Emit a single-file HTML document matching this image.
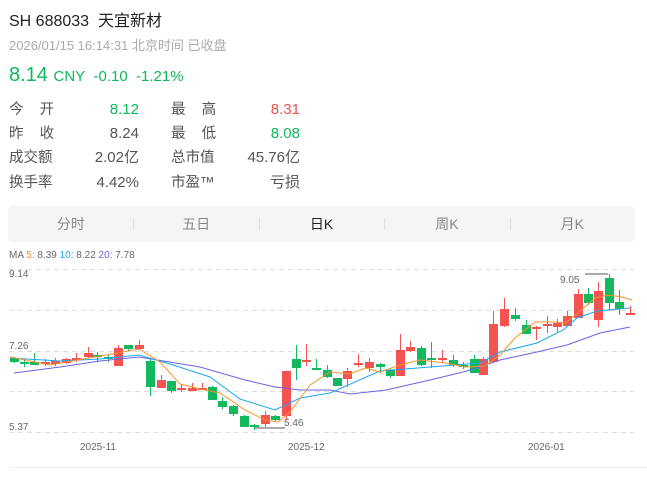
<!DOCTYPE html><html><head><meta charset="utf-8"><style>
body{margin:0;width:647px;height:477px;background:#fff;font-family:"Liberation Sans","Noto Sans CJK SC",sans-serif;position:relative;overflow:hidden}
.a{position:absolute;white-space:nowrap}
.g{color:#0cb85e}.r{color:#f24e4e}.l{color:#555;font-size:14.5px;line-height:20px}.v{color:#555;font-size:15px;line-height:20px;text-align:right}
.tabs{position:absolute;left:8px;top:206px;width:627px;height:36px;background:#f5f5f5;border-radius:5px;display:flex}
.tabs div{flex:1;text-align:center;line-height:36px;font-size:14px;color:#888;position:relative}
.tabs div+div:before{content:"";position:absolute;left:0;top:12px;height:12px;border-left:1px solid #e3e3e3}
</style></head><body>
<div class="a" style="left:9px;top:7px;font-size:16px;color:#222">SH 688033&nbsp; 天宜新材</div>
<div class="a" style="left:9px;top:35px;font-size:13px;color:#aaa">2026/01/15 16:14:31 北京时间 已收盘</div>
<div class="a g" style="left:9px;top:64px;font-size:20px">8.14 <span style="font-size:15px">CNY&nbsp; -0.10&nbsp; -1.21%</span></div>
<div class="a l" style="left:9px;top:100px">今&nbsp;&nbsp;&nbsp;&nbsp;开</div><div class="a v g" style="left:80px;width:59px;top:100px;color:#0cb85e">8.12</div>
<div class="a l" style="left:9px;top:124px">昨&nbsp;&nbsp;&nbsp;&nbsp;收</div><div class="a v" style="left:80px;width:59px;top:124px">8.24</div>
<div class="a l" style="left:9px;top:148px">成交额</div><div class="a v" style="left:80px;width:59px;top:148px">2.02亿</div>
<div class="a l" style="left:9px;top:173px">换手率</div><div class="a v" style="left:80px;width:59px;top:173px">4.42%</div>
<div class="a l" style="left:171px;top:100px">最&nbsp;&nbsp;&nbsp;&nbsp;高</div><div class="a v" style="left:240px;width:60px;top:100px;color:#f24e4e">8.31</div>
<div class="a l" style="left:171px;top:124px">最&nbsp;&nbsp;&nbsp;&nbsp;低</div><div class="a v" style="left:240px;width:60px;top:124px;color:#0cb85e">8.08</div>
<div class="a l" style="left:171px;top:148px">总市值</div><div class="a v" style="left:230px;width:70px;top:148px">45.76亿</div>
<div class="a l" style="left:171px;top:173px">市盈™</div><div class="a v" style="left:240px;width:60px;top:173px">亏损</div>
<div class="tabs"><div>分时</div><div>五日</div><div style="color:#222">日K</div><div>周K</div><div>月K</div></div>
<svg class="a" style="left:0;top:245px" width="647" height="232" viewBox="0 245 647 232">
<g font-size="10" fill="#666"><text x="9" y="258">MA <tspan fill="#f7942a">5:</tspan> 8.39 <tspan fill="#1fa6f0">10:</tspan> 8.22 <tspan fill="#6b63e8">20:</tspan> 7.78</text>
<text x="9" y="277">9.14</text><text x="9" y="349">7.26</text><text x="9" y="430">5.37</text>
<text x="80" y="450">2025-11</text><text x="288" y="450">2025-12</text><text x="528" y="450">2026-01</text>
<text x="284" y="426">5.46</text><text x="560" y="283">9.05</text></g>
<g stroke="#ddd" stroke-dasharray="5,4"><line x1="9" x2="634" y1="269.5" y2="269.5"/><line x1="9" x2="634" y1="310.5" y2="310.5"/><line x1="9" x2="634" y1="351.5" y2="351.5"/><line x1="9" x2="634" y1="391.5" y2="391.5"/><line x1="9" x2="634" y1="432.5" y2="432.5"/></g>
<line x1="9" x2="647" y1="467.5" y2="467.5" stroke="#eee"/>
<path d="M254 428H285M585 274H608" stroke="#555" fill="none"/>
<g id="c"></g>
<polyline fill="none" stroke="#6b63e8" stroke-width="1" points="14,373 60,367 100,361 139,357 200,367 245,380 275,387 300,390 330,390 350,394 386,390 430,380 467,371 500,360 537,352 567,345 600,333 630,327"/>
<polyline fill="none" stroke="#1fa6f0" stroke-width="1" points="10,358 60,361 100,359 139,355 170,364 210,377 240,399 275,410 300,398 330,393 380,371 430,367 480,363 500,352 537,343 563,330 577,318 597,311 630,308"/>
<polyline fill="none" stroke="#f7942a" stroke-width="1" points="10,357 50,365 100,356 139,349 160,362 180,384 200,389 220,393 245,410 265,420 278,422 290,412 310,385 330,372 350,374 365,368 380,372 400,365 420,360 445,363 465,367 485,366 500,355 515,338 535,322 555,322 565,323 578,313 595,298 608,295 622,297 632,300"/>
</svg>
<script>
var d=[[14,'g',358,362,357,363],[24,'g',362,363,359,367],[34,'g',362,365,353,365],[45,'r',362,364,359,366],[55,'r',361,364,358,366],[66,'r',359,363,358,364],[76,'r',358,360,353,362],[88,'r',353,357,347,358],[97,'g',355,357,352,362],[108,'g',357,359,355,362],[118,'r',348,366,345,366],[128,'g',345,349,345,351],[139,'r',345,349,340,350],[150,'g',361,387,358,396],[161,'r',380,388,375,388],[171,'g',381,391,381,393],[181,'r',388,390,385,392],[192,'r',388,391,383,391],[202,'r',388,390,383,390],[212,'g',387,400,386,400],[222,'g',401,407,397,409],[233,'g',406,414,405,416],[244,'g',416,427,415,427],[254,'g',425,426,424,430],[265,'r',415,424,411,427],[275,'g',416,420,415,422],[286,'r',371,416,371,420],[296,'g',359,368,345,380],[306,'r',360,361,344,366],[316,'g',368,369,359,370],[327,'g',370,377,365,378],[337,'g',378,386,378,386],[347,'r',371,379,368,387],[358,'r',363,364,354,367],[369,'r',362,368,358,372],[380,'g',364,367,363,373],[390,'g',370,376,368,378],[400,'r',350,376,334,376],[410,'r',347,351,341,352],[421,'g',348,365,346,366],[431,'g',358,359,342,368],[442,'r',358,360,350,363],[453,'g',360,365,355,367],[463,'g',365,367,362,369],[474,'g',359,373,355,373],[483,'r',359,375,357,375],[493,'r',324,362,311,362],[504,'r',309,326,298,327],[515,'g',315,319,308,321],[526,'g',325,334,320,334],[536,'r',327,328,326,340],[547,'r',324,326,316,333],[557,'r',323,327,319,332],[567,'r',316,326,311,326],[578,'r',294,318,289,318],[588,'g',294,303,288,305],[598,'r',291,320,282,327],[609,'g',278,303,274,311],[619,'g',302,309,290,315],[630,'r',313,315,306,315]];
var s='';d.forEach(function(c){var col=c[1]=='r'?'#f55252':'#12b85e';s+='<line x1="'+(c[0]+.5)+'" x2="'+(c[0]+.5)+'" y1="'+c[4]+'" y2="'+c[5]+'" stroke="'+col+'"/><rect x="'+(c[0]-4)+'" y="'+c[2]+'" width="9" height="'+Math.max(2,c[3]-c[2])+'" fill="'+col+'"/>';});
document.getElementById('c').innerHTML=s;
</script>
</body></html>
